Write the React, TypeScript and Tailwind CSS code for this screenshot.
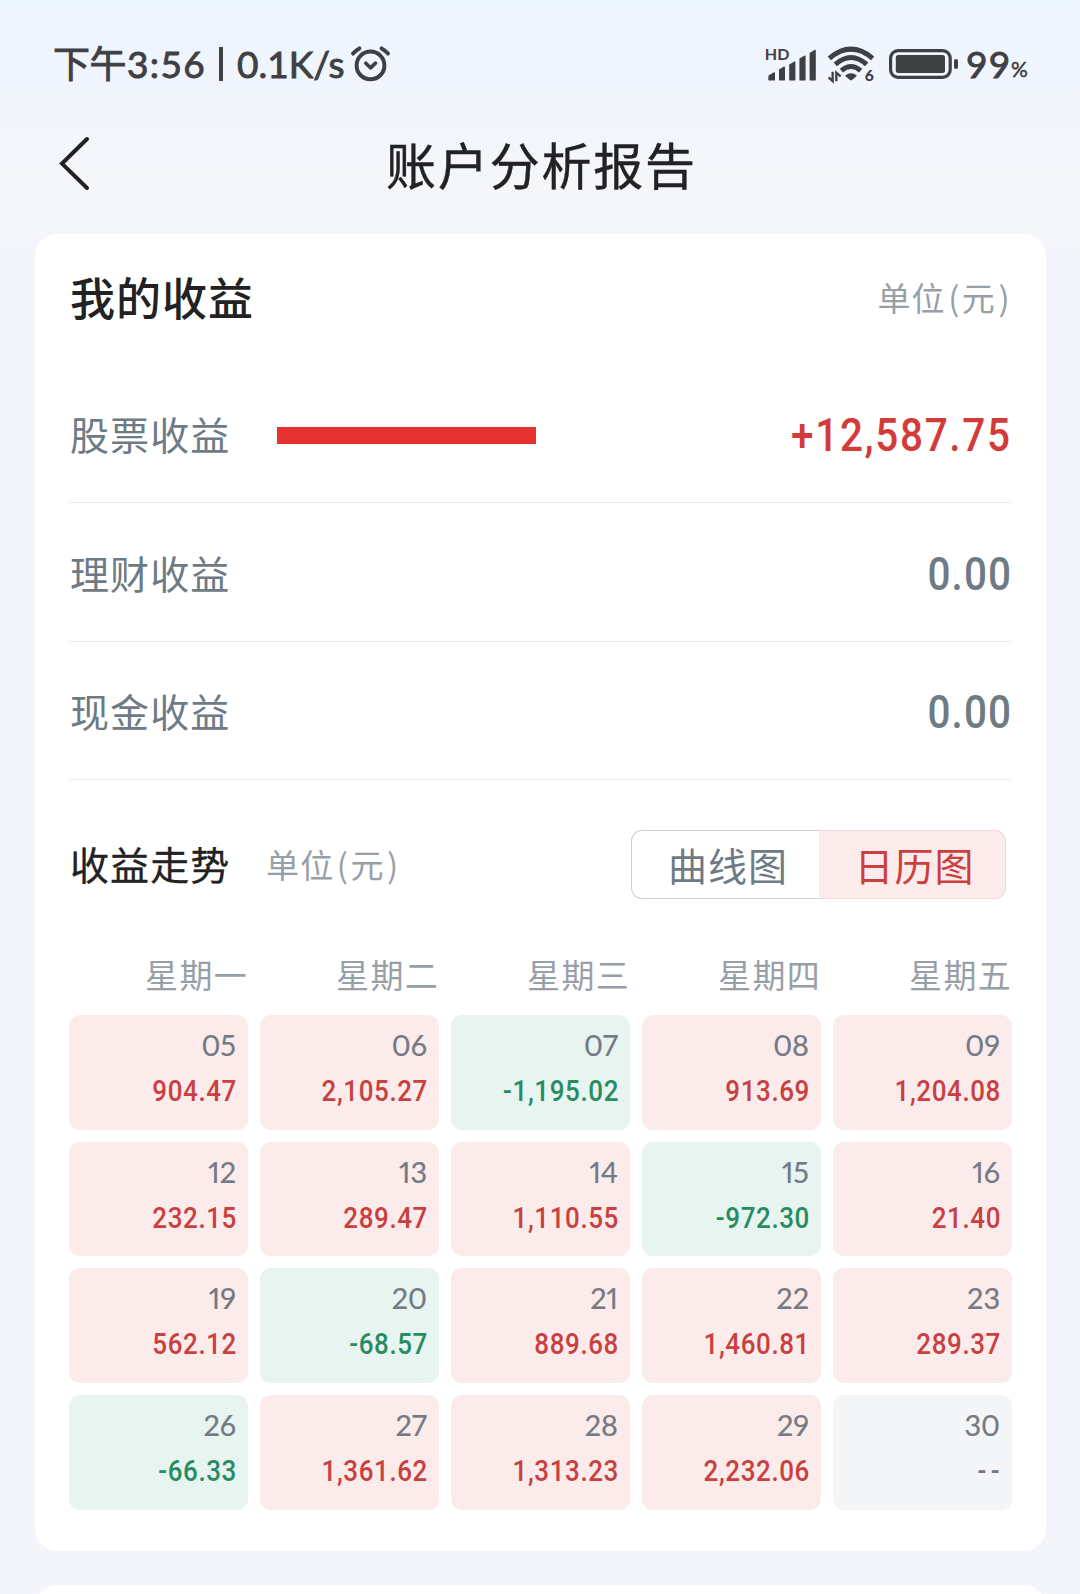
const CJK = "font-['Lato','Noto_Sans_CJK_SC',sans-serif]";

type Tone = "up" | "down" | "none";

const cellTone: Record<Tone, string> = {
  up: "bg-[#fcebeb] text-[#c8403f]",
  down: "bg-[#e7f4f0] text-[#288c62]",
  none: "bg-[#f3f5f7] text-[#6e7a84]",
};

const days: [string, string][] = [
  ["05", "904.47"], ["06", "2,105.27"], ["07", "-1,195.02"], ["08", "913.69"], ["09", "1,204.08"],
  ["12", "232.15"], ["13", "289.47"], ["14", "1,110.55"], ["15", "-972.30"], ["16", "21.40"],
  ["19", "562.12"], ["20", "-68.57"], ["21", "889.68"], ["22", "1,460.81"], ["23", "289.37"],
  ["26", "-66.33"], ["27", "1,361.62"], ["28", "1,313.23"], ["29", "2,232.06"], ["30", "--"],
];

const weekdays = ["星期一", "星期二", "星期三", "星期四", "星期五"];

function toneOf(value: string): Tone {
  if (value === "--") return "none";
  return value.startsWith("-") ? "down" : "up";
}

function AlarmIcon() {
  return (
    <svg className="ml-[5px] h-[38px] w-[41px]" viewBox="0 0 41 38" fill="none" stroke="currentColor" strokeLinecap="round" strokeLinejoin="round">
      <circle cx="20.5" cy="20.4" r="13.9" strokeWidth="4" />
      <path d="M3 8.6Q5.6 5.4 9.4 3.4M31.6 3.4Q35.4 5.4 38 8.6" strokeWidth="3.9" />
      <path d="M15.8 18.2l4.7 4.6 5-4.6" strokeWidth="3.7" />
    </svg>
  );
}

function SignalIcon() {
  return (
    <svg className="h-[36px] w-[51px] overflow-visible" viewBox="0 0 51 36" fill="currentColor">
      <text x="-1.2" y="14" fontFamily="Lato" fontWeight="700" fontSize="16">HD</text>
      <path d="M2.5 29.4L8 26.2Q9 26 9 27V33.4Q9 34.6 8 34.6H3.4Q2.3 34.6 2.3 33.4Z" />
      <path d="M13 23.6L18 20.6Q19 20.4 19 21.4V33.4Q19 34.6 18 34.6H14Q13 34.6 13 33.4Z" />
      <path d="M23.2 18.4L28.4 15.4Q29.4 15.2 29.4 16.2V33.4Q29.4 34.6 28.4 34.6H24.2Q23.2 34.6 23.2 33.4Z" />
      <path d="M33.4 12.6L38.6 9.6Q39.6 9.4 39.6 10.4V33.4Q39.6 34.6 38.6 34.6H34.4Q33.4 34.6 33.4 33.4Z" />
      <path d="M43.6 7L48.8 3.8Q49.8 3.6 49.8 4.6V33.4Q49.8 34.6 48.8 34.6H44.6Q43.6 34.6 43.6 33.4Z" />
    </svg>
  );
}

function WifiIcon() {
  return (
    <svg className="ml-[10px] h-[36px] w-[48px] overflow-visible" viewBox="261 81 144 108" fill="none" stroke="currentColor" strokeWidth="15">
      <path d="M268 118Q333 63 398 118" />
      <path d="M286 136Q333 95 380 136" />
      <path d="M304 155Q333 130 362 155" />
      <path d="M315 170Q333 156 351 170L337 182Q333 185 329 182Z" fill="currentColor" stroke="none" />
      <path d="M278 158V186L266 175M289 187V161L302 172" strokeWidth="7" />
      <text x="374" y="187" fontFamily="Lato" fontWeight="900" fontSize="47" fill="currentColor" stroke="none">6</text>
    </svg>
  );
}

function BatteryIcon() {
  return (
    <svg className="ml-[14px] h-[30px] w-[70px]" viewBox="0 0 70 30" fill="currentColor">
      <rect x="1.6" y="1.6" width="59.6" height="26.8" rx="7.5" fill="none" stroke="currentColor" strokeWidth="3.2" />
      <rect x="6.8" y="6" width="49.2" height="18" rx="2.5" />
      <rect x="65" y="10" width="4" height="10" rx="2" />
    </svg>
  );
}

function StatusBar() {
  return (
    <div className="flex h-[128px] items-center pl-[53px] pr-[51px] text-[#3f4043]">
      <div className="flex h-[50px] items-center text-[37px] leading-[50px]">
        <span className="w-[74px] tracking-[-0.6px] [-webkit-text-stroke:0.9px_currentColor]">下午</span>
        <span className="w-[79px] tracking-[1.4px] [-webkit-text-stroke:0.9px_currentColor]">3:56</span>
        <span className="ml-[13px] h-[34px] w-[4px] bg-[#3f4043]" />
        <span className="ml-[14px] w-[108px] [-webkit-text-stroke:0.9px_currentColor]">0.1K/s</span>
      </div>
      <AlarmIcon />
      <div className="ml-auto flex items-center">
        <SignalIcon />
        <WifiIcon />
        <BatteryIcon />
        <span className="ml-[7px] w-[45px] text-[37px] leading-[50px] tracking-[1.4px] [-webkit-text-stroke:0.9px_currentColor]">99</span>
        <span className="w-[18px] pt-[9px] text-[21px] leading-[28px] [-webkit-text-stroke:0.5px_currentColor]">%</span>
      </div>
    </div>
  );
}

function NavBar() {
  return (
    <div className="grid h-[106px] grid-cols-[200px_1fr_200px] items-start">
      <svg className="mt-[7px] ml-[57px] h-[58px] w-[36px]" viewBox="0 0 36 58" fill="none" stroke="#222" strokeWidth="4" strokeLinecap="round" strokeLinejoin="miter">
        <path d="M30 4L5 28.6L30 53" />
      </svg>
      <h1 className="pt-[3px] pl-[3px] text-center text-[50px] leading-[70px] tracking-[1.8px] text-[#222] [-webkit-text-stroke:0.4px_currentColor]">账户分析报告</h1>
    </div>
  );
}

function Unit() {
  return (
    <span className="text-[33px] tracking-[1.2px] text-[#98a0a7]">
      单位<span className="inline-block w-[16px] text-center font-['Noto_Sans_CJK_SC'] leading-none tracking-normal">(</span>元
      <span className="inline-block w-[16px] text-center font-['Noto_Sans_CJK_SC'] leading-none tracking-normal">)</span>
    </span>
  );
}

function ProfitRow({ label, value, bar }: { label: string; value: string; bar?: boolean }) {
  return (
    <div className="mr-px flex h-[138.4px] items-center border-b border-[#ececee] pt-[3px]">
      <span className="w-[208px] pl-px pt-px text-[39px] tracking-[1.1px] text-[#6e7a84]">{label}</span>
      {bar && <span className="h-[17px] w-[259px] bg-[#e63331]" />}
      <span
        className={
          "-mr-px ml-auto origin-right scale-x-[0.88] pt-px font-['Roboto'] text-[46px] font-medium " +
          (bar ? "tracking-[1.9px] text-[#d33b39]" : "tracking-[1.2px] text-[#6e7a84]")
        }
      >
        {value}
      </span>
    </div>
  );
}

export default function App() {
  return (
    <div className={`${CJK} h-[1594px] w-[1080px] overflow-hidden bg-[#f4f5fa] bg-[linear-gradient(180deg,#edf5ff_0px,#f1f5fd_90px,#f4f6fa_180px,#f4f5fa_260px)]`}>
      <StatusBar />
      <NavBar />
      <main className="flex flex-col gap-[34px] pl-[35px] pr-[34px]">
        <section className="h-[1317px] rounded-[22px] bg-white px-[34px]">
          <div className="flex h-[131px] items-center justify-between">
            <h2 className="pl-px text-[45px] font-medium tracking-[1px] text-[#222]">我的收益</h2>
            <div className="pb-[2px]"><Unit /></div>
          </div>
          <ProfitRow label="股票收益" value="+12,587.75" bar />
          <ProfitRow label="理财收益" value="0.00" />
          <ProfitRow label="现金收益" value="0.00" />
          <div className="flex h-[168px] items-center">
            <h3 className="w-[197px] pt-[3px] pl-px text-[39px] tracking-[1.1px] text-[#222] [-webkit-text-stroke:0.3px_currentColor]">收益走势</h3>
            <div className="pt-[4px]"><Unit /></div>
            <div className="mr-[6px] ml-auto flex h-[69px] w-[375px] rounded-[11px] text-[39px] tracking-[1px]">
              <button className="h-full w-[188px] rounded-l-[11px] border border-r-0 border-[#cfd2d5] pt-[3px] pl-[5px] text-center leading-[64px] text-[#6e7a84]">曲线图</button>
              <button className="h-full w-[187px] rounded-r-[11px] border border-l-0 border-[#f0d8d8] bg-[#fcebeb] pt-[3px] pl-[5px] text-center leading-[64px] text-[#cb3f3d]">日历图</button>
            </div>
          </div>
          <div className="grid h-[67px] grid-cols-5 gap-x-[12px] pt-[2px] text-right text-[33px] leading-[50px] tracking-[1.3px] text-[#98a0a7]">
            {weekdays.map((d) => (
              <span key={d}>{d}</span>
            ))}
          </div>
          <div className="grid auto-rows-[114.67px] grid-cols-5 gap-[12px]">
            {days.map(([day, value]) => (
              <div key={day} className={`${cellTone[toneOf(value)]} rounded-[11px] pt-[8px] pr-[12px] text-right`}>
                <div className="text-[28.8px] leading-[44px] text-[#737a83] proportional-nums [-webkit-text-stroke:0.2px_currentColor]">{day}</div>
                <div
                  className={
                    "origin-right scale-x-[0.88] font-['Roboto'] text-[29.5px] leading-[48px] font-medium " +
                    (value === "--" ? "-mr-[4px] tracking-[5px]" : "-mr-px tracking-[0.7px]")
                  }
                >
                  {value}
                </div>
              </div>
            ))}
          </div>
        </section>
        <section className="h-[60px] shrink-0 rounded-[22px] bg-white" />
      </main>
    </div>
  );
}
